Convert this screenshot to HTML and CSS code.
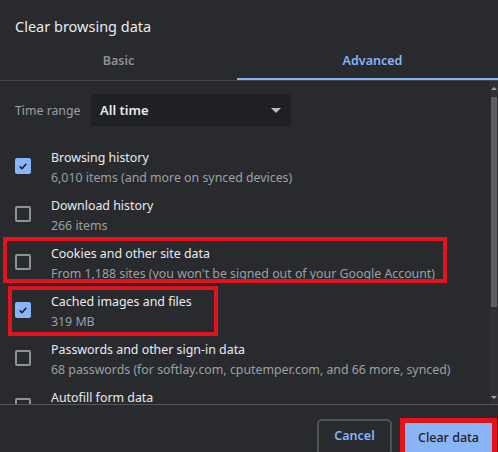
FILE: index.html
```html
<!DOCTYPE html>
<html lang="en">
<head>
<meta charset="utf-8">
<title>Clear browsing data</title>
<link rel="stylesheet" href="styles.css">
</head>
<body>
<div class="dialog">
  <h1 class="title">Clear browsing data</h1>
  <div class="tabs">
    <div class="tab">Basic</div>
    <div class="tab active">Advanced</div>
  </div>
  <div class="scroller">
    <div class="content">
      <div class="range-row">
        <span class="range-label">Time range</span>
        <div class="select">
          <span class="select-value">All time</span>
          <span class="arrow"></span>
        </div>
      </div>
      <div class="list">
        <div class="row">
          <span class="check checked"><svg viewBox="0 0 16 16" width="16" height="16"><path d="M4.6 8.3 L7 10.6 L11.4 5.8" fill="none" stroke="#202124" stroke-width="1.6"/></svg></span>
          <div class="text"><div class="row-title">Browsing history</div><div class="row-sub">6,010 items (and more on synced devices)</div></div>
        </div>
        <div class="row">
          <span class="check"></span>
          <div class="text"><div class="row-title">Download history</div><div class="row-sub">266 items</div></div>
        </div>
        <div class="row">
          <span class="check"></span>
          <div class="text"><div class="row-title">Cookies and other site data</div><div class="row-sub">From 1,188 sites (you won't be signed out of your Google Account)</div></div>
        </div>
        <div class="row">
          <span class="check checked"><svg viewBox="0 0 16 16" width="16" height="16"><path d="M4.6 8.3 L7 10.6 L11.4 5.8" fill="none" stroke="#202124" stroke-width="1.6"/></svg></span>
          <div class="text"><div class="row-title">Cached images and files</div><div class="row-sub">319 MB</div></div>
        </div>
        <div class="row">
          <span class="check"></span>
          <div class="text"><div class="row-title">Passwords and other sign-in data</div><div class="row-sub">68 passwords (for softlay.com, cputemper.com, and 66 more, synced)</div></div>
        </div>
        <div class="row">
          <span class="check"></span>
          <div class="text"><div class="row-title">Autofill form data</div><div class="row-sub">&nbsp;</div></div>
        </div>
        <div class="mark mark-cookies"></div>
        <div class="mark mark-cache"></div>
      </div>
    </div>
    <div class="scrollbar">
      <div class="sb-btn"><span class="sb-up"></span></div>
      <div class="sb-track"><div class="sb-thumb"></div></div>
      <div class="sb-btn"><span class="sb-down"></span></div>
    </div>
  </div>
  <div class="footer">
    <button class="btn cancel">Cancel</button>
    <button class="btn primary">Clear data</button>
  </div>
</div>
</body>
</html>
```

FILE: styles.css
```css
* { box-sizing: border-box; }
html, body {
  margin: 0;
  padding: 0;
  background: #292a2d;
  height: 452px;
  overflow: hidden;
}
body {
  font-family: "Noto Sans", "Open Sans", sans-serif;
  color: #e8eaed;
}
.dialog {
  display: flex;
  flex-direction: column;
  height: 452px;
}
.title {
  flex: none;
  margin: 0;
  height: 44px;
  padding: 15px 15px 0;
  font-size: 14.5px;
  font-weight: 400;
  line-height: 22px;
  color: #e8eaed;
}
.tabs {
  flex: none;
  display: flex;
  height: 37px;
  border-bottom: 1px solid #45474b;
}
.tab {
  width: 237px;
  display: flex;
  align-items: center;
  justify-content: center;
  font-size: 12.5px;
  font-weight: 600;
  color: #8e9196;
  padding-bottom: 3px;
}
.tab.active {
  flex: 1;
  color: #8ab4f8;
  padding-left: 10px;
  box-shadow: inset 0 -2px 0 #8ab4f8;
}
.scroller {
  flex: none;
  height: 323px;
  display: flex;
  overflow: hidden;
}
.content {
  flex: 1;
  overflow: hidden;
  padding-top: 13px;
}
.range-row {
  display: flex;
  align-items: center;
  padding-left: 15px;
}
.range-label {
  flex: none;
  width: 76px;
  font-size: 12.3px;
  color: #9aa0a6;
  white-space: nowrap;
}
.select {
  width: 200px;
  height: 32px;
  background: #1f2023;
  border-radius: 4px;
  display: flex;
  align-items: center;
  justify-content: space-between;
  padding: 0 9px 0 9px;
}
.select-value {
  font-size: 13px;
  font-weight: 600;
  color: #e8eaed;
}
.arrow {
  width: 0;
  height: 0;
  border-left: 5px solid transparent;
  border-right: 5px solid transparent;
  border-top: 5px solid #b6b8bb;
  margin-right: 1px;
}
.list {
  position: relative;
  margin-top: 16px;
}
.row {
  height: 48px;
  display: flex;
  align-items: center;
  padding-left: 15px;
  gap: 20px;
}
.text {
  padding-top: 4px;
}
.check {
  width: 16px;
  height: 16px;
  border: 2px solid #8e9297;
  border-radius: 2px;
  flex: none;
  display: flex;
}
.check.checked {
  border: none;
  background: #8ab4f8;
}
.row-title {
  font-size: 12.4px;
  line-height: 20px;
  color: #e8eaed;
  white-space: nowrap;
}
.row-sub {
  font-size: 12.35px;
  line-height: 20px;
  color: #9aa0a6;
  white-space: nowrap;
}
.mark {
  position: absolute;
  border: 4px solid #e3121c;
  pointer-events: none;
}
.mark-cookies {
  left: 3px;
  top: 95px;
  width: 444px;
  height: 46px;
}
.mark-cache {
  left: 8px;
  top: 144px;
  width: 210px;
  height: 50px;
}
.scrollbar {
  width: 8px;
  flex: none;
  display: flex;
  flex-direction: column;
  background: #2f3033;
}
.sb-btn {
  height: 14px;
  display: flex;
  align-items: center;
  justify-content: center;
}
.sb-up {
  border-left: 3px solid transparent;
  border-right: 3px solid transparent;
  border-bottom: 3px solid #a0a2a5;
}
.sb-down {
  border-left: 3px solid transparent;
  border-right: 3px solid transparent;
  border-top: 3px solid #a0a2a5;
}
.sb-track {
  flex: 1;
  padding: 2px 1px 0;
}
.sb-thumb {
  height: 210px;
  background: #5d5e61;
}
.footer {
  flex: 1;
  min-height: 0;
  overflow: hidden;
  border-top: 1px solid #55575b;
  display: flex;
  justify-content: flex-end;
  align-items: flex-start;
  padding: 14px 6px 0 0;
  gap: 13px;
}
.btn {
  flex: none;
  font-family: "Noto Sans", "Open Sans", sans-serif;
  font-size: 12.5px;
  font-weight: 600;
  height: 36px;
  border-radius: 5px;
  padding: 0;
}
.cancel {
  width: 75px;
  background: transparent;
  border: 2px solid #4f5257;
  color: #8ab4f8;
  padding-bottom: 4px;
}
.primary {
  width: 87px;
  margin-top: 4px;
  background: #8ab4f8;
  border: none;
  border-radius: 0;
  color: #202124;
  font-weight: 500;
  outline: 5px solid #e3121c;
  padding-bottom: 8px;
}
```
